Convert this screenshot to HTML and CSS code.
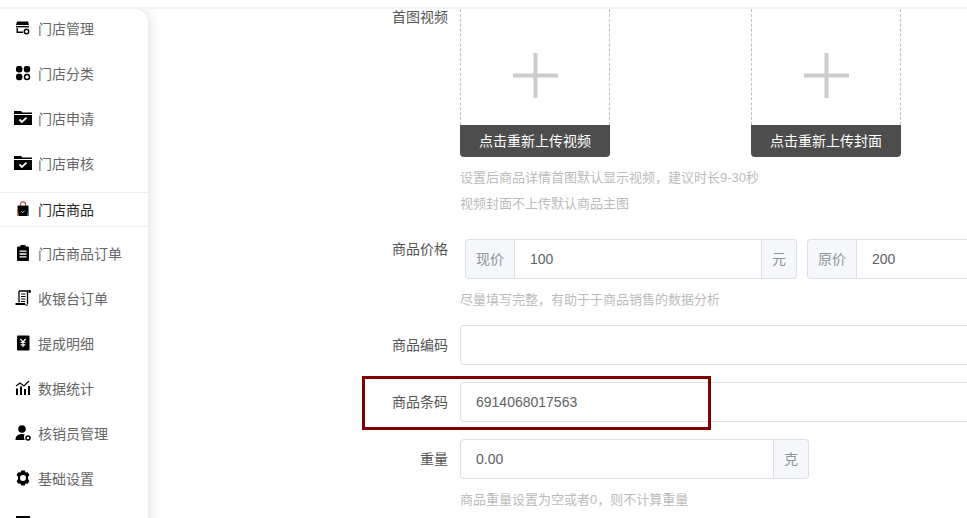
FILE: index.html
```html
<!DOCTYPE html>
<html lang="zh-CN">
<head>
  <meta charset="UTF-8">
  <meta name="viewport" content="width=device-width, initial-scale=1.0">
  <title>门店商品</title>
  <link rel="stylesheet" href="styles.css">
</head>
<body>
  <div class="topbar"></div>
  <div class="page">
    <aside class="sidebar">
      <a class="nav-item">
        <svg class="nav-icon" viewBox="0 0 16 16"><path d="M2 1.500h11l1 3.500H1z"/><rect x="1" y="6" width="13" height="1.400"/><path d="M1.500 8h1.400v3.500H8V13H1.500z"/><circle cx="11.500" cy="11.500" r="2.200" fill="none" stroke="#000" stroke-width="1.400"/></svg>
        <span>门店管理</span>
      </a>
      <a class="nav-item">
        <svg class="nav-icon" viewBox="0 0 16 16"><rect x="1" y="1" width="6.400" height="6.400" rx="2.400"/><rect x="8.800" y="1" width="6.400" height="6.400" rx="2.400"/><rect x="1" y="8.800" width="6.400" height="6.400" rx="2.400"/><circle cx="12" cy="12" r="2.500" fill="none" stroke="#000" stroke-width="1.500"/></svg>
        <span>门店分类</span>
      </a>
      <a class="nav-item">
        <svg class="nav-icon wide" viewBox="0 0 18 14"><path d="M0 0h7l1.500 1.500H18V3H0z"/><path d="M0 4h18v10H0z"/><path d="M5.500 8.500l2.400 2.400 4.600-4.200" fill="none" stroke="#fff" stroke-width="1.800"/></svg>
        <span>门店申请</span>
      </a>
      <a class="nav-item">
        <svg class="nav-icon wide" viewBox="0 0 18 14"><path d="M0 0h7l1.500 1.500H18V3H0z"/><path d="M0 4h18v10H0z"/><path d="M5.500 8.500l2.400 2.400 4.600-4.200" fill="none" stroke="#fff" stroke-width="1.800"/></svg>
        <span>门店审核</span>
      </a>
      <a class="nav-item active">
        <svg class="nav-icon" viewBox="0 0 16 16"><path d="M5.400 5V3.400a2.600 2.600 0 0 1 5.200 0V5" fill="none" stroke="#b5534a" stroke-width="1.200"/><path d="M2.500 4.600h11V15h-11z"/><path d="M13.500 6v9h-1.400z" fill="#2b7fd0"/><path d="M2.500 6v9h1.400z" fill="#d9822b"/><path d="M6.500 10.500l1.200 1.200 2-2" fill="none" stroke="#e9d98a" stroke-width="1"/></svg>
        <span>门店商品</span>
      </a>
      <a class="nav-item">
        <svg class="nav-icon" viewBox="0 0 16 16"><path d="M5.500 0h5v1.600H13a1 1 0 0 1 1 1V15a1 1 0 0 1-1 1H3a1 1 0 0 1-1-1V2.600a1 1 0 0 1 1-1h2.500z"/><path d="M4.500 6.200h7M4.500 9h7M4.500 11.800h7" stroke="#fff" stroke-width="1.300"/></svg>
        <span>门店商品订单</span>
      </a>
      <a class="nav-item">
        <svg class="nav-icon" viewBox="0 0 16 16"><path d="M4 1h9.500M4 1v11.500M12.500 1v13" fill="none" stroke="#000" stroke-width="1.300"/><path d="M6 4h4.500M6 6.500h4.500M6 9h4.500M6 11.500h4" stroke="#000" stroke-width="1.200"/><path d="M0.500 13h9.500v2H0.500z"/><path d="M10 15h3" stroke="#000"/><rect x="13.500" y="0" width="2.300" height="2.800"/></svg>
        <span>收银台订单</span>
      </a>
      <a class="nav-item">
        <svg class="nav-icon" viewBox="0 0 16 16"><rect x="2" y="0.500" width="12.500" height="15" rx="1"/><path d="M5.400 4l2.600 3 2.600-3M8 7v5M5.600 7.500h4.800M5.600 9.800h4.800" fill="none" stroke="#fff" stroke-width="1.200"/></svg>
        <span>提成明细</span>
      </a>
      <a class="nav-item">
        <svg class="nav-icon" viewBox="0 0 16 16"><path d="M1 8.500h2v6.500H1zM5 6.500h2V15H5zM9 9h2v6H9zM13 6h2v9h-2z"/><path d="M1 6l4-3 4 3 5-5" fill="none" stroke="#000" stroke-width="1.200"/></svg>
        <span>数据统计</span>
      </a>
      <a class="nav-item">
        <svg class="nav-icon" viewBox="0 0 16 16"><circle cx="7" cy="4" r="3.800"/><path d="M0.500 15c0-4 2.500-6 6.500-6 1.200 0 2 .2 2.800.5-1 1.200-1.300 3.500 0 5.500z"/><circle cx="13" cy="13" r="2" fill="none" stroke="#000" stroke-width="1.500"/></svg>
        <span>核销员管理</span>
      </a>
      <a class="nav-item">
        <svg class="nav-icon" viewBox="0 0 16 16"><path fill-rule="evenodd" d="M6.300.5h3.400l.8 2 2.200-.3 1.700 2.900L13 6.800 13 9.200l1.400 1.700-1.700 2.900-2.200-.3-.8 2H6.300l-.8-2-2.200.3-1.700-2.900L3 9.200V6.800L1.600 5.100l1.700-2.900 2.200.3zM8 5a3 3 0 1 0 0 6 3 3 0 0 0 0-6z"/></svg>
        <span>基础设置</span>
      </a>
      <a class="nav-item">
        <svg class="nav-icon" viewBox="0 0 16 16"><path d="M1 1h14v2H1zM1 5h6v2H1zM9 5h6v2H9z"/></svg>
      </a>
    </aside>

    <main class="form">
      <div class="form-row upload-row">
        <label class="form-label">首图视频</label>
        <div class="upload-list">
          <div class="upload-box">
            <div class="upload-area">
              <svg class="plus" viewBox="0 0 45 45"><path d="M22.500 1v43M1 22.500h43" stroke="#ccc" stroke-width="4" stroke-linecap="round"/></svg>
            </div>
            <div class="upload-btn">点击重新上传视频</div>
          </div>
          <div class="upload-box">
            <div class="upload-area">
              <svg class="plus" viewBox="0 0 45 45"><path d="M22.500 1v43M1 22.500h43" stroke="#ccc" stroke-width="4" stroke-linecap="round"/></svg>
            </div>
            <div class="upload-btn">点击重新上传封面</div>
          </div>
        </div>
      </div>
      <p class="hint first-hint">设置后商品详情首图默认显示视频，建议时长9-30秒</p>
      <p class="hint">视频封面不上传默认商品主图</p>

      <div class="form-row price-row">
        <label class="form-label top">商品价格</label>
        <div class="input-group price-group">
          <span class="addon left">现价</span>
          <input class="text-input" type="text" value="100">
          <span class="addon right">元</span>
        </div>
        <div class="input-group price-group second">
          <span class="addon left">原价</span>
          <input class="text-input" type="text" value="200">
        </div>
      </div>
      <p class="hint first-hint">尽量填写完整，有助于于商品销售的数据分析</p>

      <div class="form-row code-row">
        <label class="form-label">商品编码</label>
        <input class="text-input full" type="text">
      </div>

      <div class="form-row barcode-row">
        <label class="form-label">商品条码</label>
        <input class="text-input full" type="text" value="6914068017563">
        <div class="red-box"></div>
      </div>

      <div class="form-row barcode-row">
        <label class="form-label">重量</label>
        <div class="input-group weight-group">
          <input class="text-input" type="text" value="0.00">
          <span class="addon right">克</span>
        </div>
      </div>
      <p class="hint first-hint">商品重量设置为空或者0，则不计算重量</p>
    </main>
  </div>
</body>
</html>
```

FILE: styles.css
```css
html, body { margin: 0; padding: 0; height: 518px; overflow: hidden; background: #fff; }
body { font-family: "Liberation Sans", "Noto Sans CJK SC", sans-serif; font-size: 14px; color: #606266; }

.topbar { height: 7px; border-bottom: 2px solid #f3f3f3; position: relative; z-index: 2; background: #fff; }
.page { display: flex; height: 509px; overflow: hidden; }

.sidebar { width: 148px; flex: none; height: 560px; background: #fff; border-top-right-radius: 14px; box-shadow: 0 0 14px rgba(0,0,0,.16); position: relative; z-index: 1; }
.nav-item { display: flex; align-items: center; height: 45px; padding-left: 15px; color: #666; box-sizing: border-box; }
.nav-item:first-child { margin-top: -4px; }
.nav-item span { margin-left: 7px; }
.nav-icon { width: 16px; height: 16px; flex: none; }
.nav-icon.wide { width: 18px; height: 14px; margin: 0 -1px; }
.nav-item.active { height: 35px; margin: 7px 0 3px; padding-bottom: 2px; color: #282828; border-top: 1px solid #eeeef5; border-bottom: 1px solid #eeeef5; }

.form { flex: 1; min-width: 0; overflow: hidden; }
.form-row { display: flex; align-items: center; width: 900px; }
.form-label { width: 300px; flex: none; margin-right: 12px; text-align: right; line-height: 40px; color: #555; }
.form-label.top { line-height: 20px; align-self: flex-start; }

.upload-row { align-items: flex-start; }
.upload-row .form-label { line-height: 16px; }
.upload-list { display: flex; gap: 141px; }
.upload-box { width: 150px; }
.upload-area { height: 116px; box-sizing: border-box; padding-top: 44px; text-align: center; border-left: 1px dashed #c0c0c0; border-right: 1px dashed #c0c0c0; }
.plus { width: 45px; height: 45px; }
.upload-btn { height: 32px; line-height: 32px; text-align: center; background: #4d4d4d; color: #fff; border-radius: 0 0 4px 4px; }

.hint { margin: 0 0 0 312px; line-height: 26px; font-size: 13px; color: #bbb; }
.first-hint { margin-top: 8px; }

.price-row { margin-top: 22px; }
.code-row { margin-top: 12px; }
.barcode-row { margin-top: 17px; position: relative; }

.text-input { flex: 1; min-width: 0; height: 40px; box-sizing: border-box; padding: 0 15px; border: 1px solid #dcdfe6; border-radius: 4px; font: inherit; color: #606266; background: #fff; outline: none; }
.input-group { display: flex; height: 40px; }
.addon { width: 35px; flex: none; box-sizing: border-box; line-height: 38px; text-align: center; background: #f5f7fa; color: #909399; border: 1px solid #dcdfe6; }
.addon.left { width: 49px; border-right: 0; border-radius: 4px 0 0 4px; }
.addon.right { border-left: 0; border-radius: 0 4px 4px 0; }
.input-group .text-input { border-radius: 0; }
.price-group { width: 332px; margin-left: 5px; flex: none; }
.price-group.second { margin-left: 10px; width: 400px; }
.weight-group { width: 349px; }
.weight-group .text-input { border-radius: 4px 0 0 4px; }

.red-box { position: absolute; left: 214px; top: -6px; width: 349px; height: 54px; box-sizing: border-box; border: 3px solid #800000; }
```
